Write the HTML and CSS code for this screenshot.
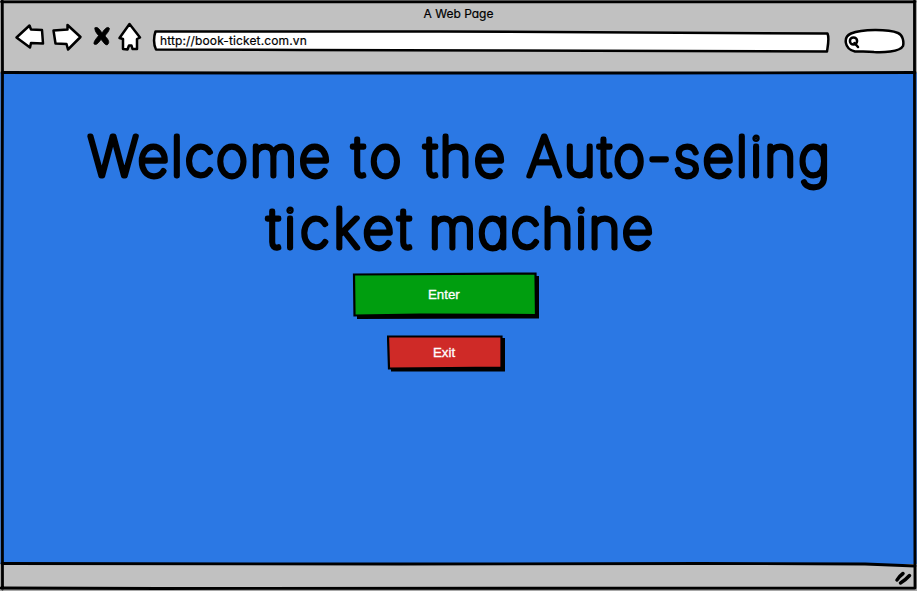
FILE: index.html
```html
<!DOCTYPE html>
<html lang="en">
<head>
<meta charset="utf-8">
<title>A Web Page</title>
<link rel="stylesheet" href="styles.css">
</head>
<body>
<div class="browser">
  <header class="chrome">
    <div class="title"><span>A Web Page</span></div>
    <div class="toolbar">
      <svg class="nav" width="130" height="34" viewBox="14 20 130 34">
        <path d="M16.500 37.500 29.500 25.500 31 29.500 42 30 43 43.500 31 43 30 47.500Z"/>
        <path d="M53.500 30.500 67.500 29.500 67.500 25 80.500 37 68 49.500 66.500 44 55.500 43.500Z"/>
        <path class="cross" d="M95 28C97 26 99.500 29 102 33C105 28 108 26 109.500 28.500C109 32 106 34 105 36C109 40 110 43 107 45C104 44.500 103 41 101 39.500C98 43.500 96 45.500 94 44C93.500 41 97 38 98.500 35.500C95.500 32 94.500 30 95 28Z"/>
        <path d="M129.500 24 140 37.500 137 39 137 49 132.500 49 131.500 45.500 129 45.500 127.500 49.500 123 49 123 39 119.500 38Z"/>
      </svg>
      <div class="address">
        <svg width="680" height="24" viewBox="152 29 680 24"><path d="M155.500 31.500 440 31.500 827.500 33.500C829.500 38 828 45 827 51.500L500 50.500 300 50 156 49.500C153.500 45 153.500 37 155.500 31.500Z"/></svg>
        <span class="url">http://book-ticket.com.vn</span>
      </div>
      <svg class="search" width="62" height="28" viewBox="844 27 62 28">
        <path d="M855 51.500C844 49 843 37 851 33.500C862 29 888 29 898 33C903 35 904 42 903 46C900 52 882 52.500 874 52C867 51 861 51.500 855 51.500Z"/>
        <circle cx="853.500" cy="41" r="3.600"/><path d="M854.500 43 858 47"/>
      </svg>
    </div>
  </header>
  <main class="page">
    <h1 class="welcome">
      <svg width="760" height="144" viewBox="80 122 760 144">
        <text x="89" y="176" textLength="242">Welcome</text>
        <text x="353" y="176" textLength="49">to</text>
        <text x="425" y="176" textLength="81">the</text>
        <text x="528" y="176" textLength="303">Auto-seling</text>
        <text x="268" y="248" textLength="144">ticket</text>
        <text x="430" y="248" textLength="224">machine</text>
      </svg>
    </h1>
    <button class="button enter">
      <svg width="188" height="48" viewBox="352 272 188 48"><path class="shadow" d="M357 276H539V318.500L357 319Z"/><path d="M354 274.500 535.500 273.500 536 315 420 314.500 354.500 315.500Z"/></svg>
      <span>Enter</span>
    </button>
    <button class="button exit">
      <svg width="119" height="38" viewBox="387 334 119 38"><path class="shadow" d="M391 338H505V371.500L391 371.500Z"/><path d="M388 336.500 501.500 336.500 501.500 367.500 450 368 389 368.500Z"/></svg>
      <span>Exit</span>
    </button>
  </main>
  <footer class="status">
    <svg width="20" height="18" viewBox="893 570 20 18"><path d="M897 580Q899 576.500 903 573.500M900.500 583Q905 580.500 909.500 575.500"/></svg>
  </footer>
  <svg class="frame" viewBox="0 0 917 591">
    <path class="edge" d="M0 0H917V3H0ZM0 0H3V591H0ZM914 0H917V591H914ZM0 588H917V591H0Z"/>
    <path d="M1.500 1.800 H915M2.300 1 2.500 75 2 300 2.500 589M914.500 1V400L915 588M1 588 160 588.500 915 588"/>
    <path d="M2 72.500 250 73 650 73 915 72.500M2 563.500 400 564 700 563.500 865 564 915 566"/>
  </svg>
</div>
</body>
</html>
```
FILE: styles.css
```css
* { box-sizing: border-box; }
body { margin: 0; background: #c1c1c1; color: #000; font: 12px/16px Inter, "Open Sans", sans-serif; font-feature-settings: "cv11"; }
.browser { position: relative; display: flex; flex-direction: column; width: 917px; height: 591px; overflow: hidden; }
.chrome { height: 73px; background: #c1c1c1; }
.title { height: 20px; padding-top: 6px; text-align: center; }
.title span, .url { -webkit-text-stroke: 0.2px #000; }
.toolbar { display: flex; align-items: flex-start; padding-left: 14px; }
svg { display: block; fill: #fff; stroke: #000; stroke-width: 2.5; stroke-linecap: round; stroke-linejoin: round; }
.nav { margin-right: 8px; }
.cross { fill: #000; stroke-width: .8; }
.address { position: relative; margin: 9px 12px 0 0; }
.url { position: absolute; left: 8px; top: 4px; letter-spacing: 0.13px; white-space: nowrap; }
.search { margin-top: 7px; }
.page { flex: 1; display: flex; flex-direction: column; align-items: center; background: #2b78e4; padding-top: 49px; }
.welcome { margin: 0 0 6px; }
.welcome text { font-family: Inter, sans-serif; font-size: 54px; font-weight: 100; fill: #000; stroke-width: 4.9; }
.button { position: relative; display: flex; align-items: center; justify-content: center; padding: 0; border: 0; background: none; color: #fff; font: 13.3px/16px "Liberation Sans", sans-serif; -webkit-text-stroke: 0.3px #fff; }
.button span { position: absolute; }
.button svg { stroke-width: 2.2; stroke-linejoin: miter; }
.button .shadow { fill: #000; stroke: none; }
.enter { margin-right: 25px; }
.enter svg { fill: #009e0f; }
.enter span { left: 76px; top: 15px; }
.exit { margin: 14px 24px 0 0; }
.exit svg { fill: #cf2a27; }
.exit span { left: 46px; top: 11px; }
.status { display: flex; justify-content: flex-end; height: 27px; padding: 6px 4px 0 0; background: #c1c1c1; }
.status svg { fill: none; stroke-width: 3.5; }
.frame { position: absolute; inset: 0; width: 917px; height: 591px; fill: none; stroke-width: 2.8; pointer-events: none; }
.frame .edge { fill: #777; stroke: none; opacity: .35; }
```
